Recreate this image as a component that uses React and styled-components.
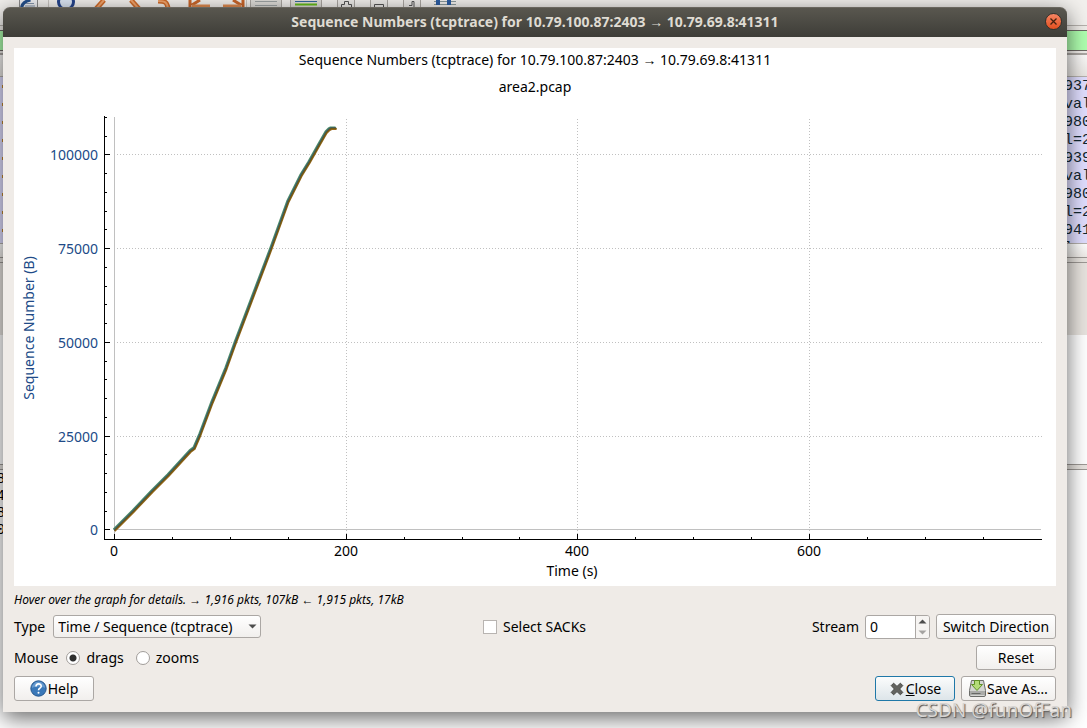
import React, { useState } from "react";
import styled, { createGlobalStyle } from "styled-components";

const GlobalStyle = createGlobalStyle`
  *, *::before, *::after {
    box-sizing: border-box;
  }
  body {
    margin: 0;
    font-family: "Noto Sans", "Open Sans", sans-serif;
    font-size: 14px;
    line-height: 20px;
    color: #000;
  }
  button, input, select {
    font: inherit;
    color: inherit;
  }
`;

/* ---- desktop and main window behind the dialog ---- */

const Desktop = styled.div`
  position: relative;
  min-height: 100vh;
  padding: 7px 20px 16px 3px;
  overflow: hidden;
`;
const MainWindow = styled.div`
  position: absolute;
  inset: 0;
  display: flex;
  flex-direction: column;
  background: #fff;
`;
const ToolBar = styled.div`
  height: 26px;
  background: #f2f0ed;
  border-bottom: 1px solid #b5b1ac;
  & svg {
    display: block;
  }
`;
const FilterBar = styled.div`
  height: 29px;
  padding: 4px 0;
  background: #efece8;
  border-bottom: 2px solid #aba7a3;
`;
const FilterField = styled.div`
  height: 21px;
  background: #afffaf;
  border: solid #6c6864;
  border-width: 1px 0;
`;
const ListHeader = styled.div`
  height: 22px;
  background: linear-gradient(#fbfaf9, #e9e6e2);
  border-bottom: 1px solid #b5b1ac;
`;
const PacketList = styled.div`
  height: 167px;
  padding-top: 1px;
  overflow: hidden;
  background: #e0deff;
  border-bottom: 1px solid #b5b1ac;
  font-family: "Liberation Mono", monospace;
  font-size: 15px;
  line-height: 18px;
  color: #12272e;
`;
const PacketRow = styled.div`
  display: flex;
  justify-content: space-between;
`;
const RowMark = styled.span`
  width: 1px;
  height: 3px;
  margin: 7px 0 0 2px;
  background: #c58a2c;
`;
const RowInfo = styled.span`
  width: 23px;
  overflow: hidden;
`;
const Scroll = styled.div`
  height: 14px;
  background: linear-gradient(#fff, #eeebe7);
  border-bottom: 1px solid #9d9995;
`;
const Splitter = styled.div`
  height: 5px;
  background: #e8e4df;
  border-bottom: 1px solid #9d9995;
`;
const Details = styled.div`
  height: 202px;
  background: linear-gradient(#e8e4df 72px, #fff 72px);
  border-bottom: 1px solid #9d9995;
`;
const Bytes = styled.div`
  padding-top: 1px;
  font-family: "Liberation Mono", monospace;
  font-size: 14px;
  line-height: 17px;
`;
const ByteRow = styled.div`
  width: 5px;
  overflow: hidden;
  direction: rtl;
`;

/* ---- dialog ---- */

const Dialog = styled.section`
  position: relative;
  border-radius: 7px 7px 0 0;
  background: #efebe7;
  box-shadow: 0 6px 22px rgba(0, 0, 0, 0.6);
`;
const TitleBar = styled.header`
  display: grid;
  grid-template-columns: 24px 1fr 24px;
  align-items: center;
  height: 30px;
  padding: 0 2px 2px;
  border-radius: 7px 7px 0 0;
  border-top: 1px solid #6a675f;
  background: linear-gradient(#59574f, #3e3d38);
`;
const Title = styled.h1`
  grid-column: 2;
  margin: 0;
  font-size: 14px;
  font-weight: 700;
  line-height: 20px;
  text-align: center;
  color: #dfdbd2;
`;
const CloseIcon = styled.button`
  display: flex;
  align-items: center;
  justify-content: center;
  justify-self: center;
  width: 17px;
  height: 17px;
  padding: 0;
  border: 1px solid #33312c;
  border-radius: 50%;
  background: linear-gradient(#f58463, #e4501f);
`;
const Body = styled.div`
  padding: 11px;
`;
const Plot = styled.svg`
  display: block;
  width: 100%;
  height: auto;
  background: #fff;
  font-size: 14px;
`;
const Hint = styled.p`
  margin: 5px 0;
  font-size: 12px;
  font-style: italic;
  line-height: 18px;
`;
const Controls = styled.div`
  display: flex;
  flex-direction: column;
  gap: 6px;
`;
const Row = styled.div`
  display: flex;
  align-items: center;
  justify-content: space-between;
  min-height: 25px;
`;
const Group = styled.div`
  display: flex;
  align-items: center;
  gap: ${(p) => (p.$wide ? 8 : 6)}px;
`;
const Option = styled.label`
  display: flex;
  align-items: center;
  gap: 6px;
  margin-right: 4px;
`;
const Button = styled.button`
  display: flex;
  align-items: center;
  justify-content: center;
  gap: 1px;
  min-width: ${(p) => p.$width || 80}px;
  height: 25px;
  padding: 0 3px;
  border: 1px solid ${(p) => (p.$active ? "#1f78a8" : "#aba7a4")};
  border-radius: 3px;
  background: ${(p) =>
    p.$active
      ? "linear-gradient(#fbfcfc, #dde5e9)"
      : "linear-gradient(#fff, #f1efed)"};
  white-space: nowrap;
`;
const SelectBox = styled.div`
  display: grid;
  align-items: center;
  & > * {
    grid-area: 1 / 1;
  }
  & > svg {
    justify-self: end;
    margin-right: 4px;
    pointer-events: none;
  }
`;
const Select = styled.select`
  appearance: none;
  width: 208px;
  height: 23px;
  padding: 0 4px;
  border: 1px solid #aba7a4;
  border-radius: 3px;
  background: linear-gradient(#fff, #f1efed);
`;
const Spin = styled.div`
  display: flex;
  width: 65px;
  height: 24px;
  border: 1px solid #aba7a4;
  border-radius: 3px;
  overflow: hidden;
  background: #fff;
`;
const SpinInput = styled.input`
  flex: 1;
  min-width: 0;
  padding: 0 4px;
  border: 0;
  outline: 0;
  background: none;
  appearance: textfield;
  &::-webkit-inner-spin-button {
    appearance: none;
  }
`;
const SpinButtons = styled.div`
  display: flex;
  flex-direction: column;
  width: 14px;
  border-left: 1px solid #aba7a4;
`;
const SpinButton = styled.button`
  display: flex;
  flex: 1;
  align-items: center;
  justify-content: center;
  padding: 0;
  border: 0;
  background: #f6f4f2;
`;
const Radio = styled.input`
  appearance: none;
  width: 14px;
  height: 14px;
  margin: 0;
  border: 1px solid #a19d9a;
  border-radius: 50%;
  background: #fff;
  &:checked {
    background: radial-gradient(#2f2f2f 3px, #fff 4px);
  }
`;
const Check = styled.input`
  appearance: none;
  width: 14px;
  height: 14px;
  margin: 0;
  border: 1px solid #b8b4b1;
  background: #fff;
  &:checked {
    background: #2f2f2f;
  }
`;
const Watermark = styled.span`
  position: absolute;
  right: 15px;
  bottom: 4px;
  font-size: 19px;
  line-height: 28px;
  color: #d6d4d2;
  text-shadow: 1px 1px 1px #555;
  pointer-events: none;
`;

const Arrow = ({ up, color = "#4d4d4d" }) => (
  <svg width="9" height="5" viewBox="0 0 9 5">
    <path d={up ? "M0.5 4.5h8L4.5 0.5z" : "M0.5 0.5h8L4.5 4.5z"} fill={color} />
  </svg>
);

const HelpIcon = () => (
  <svg width="17" height="17" viewBox="0 0 17 17">
    <circle cx="8.5" cy="8.5" r="7.7" fill="#3a78b8" stroke="#25578e" />
    <path d="M2 8a6.5 6.5 0 0 1 13 0c-4-2-9-2-13 0z" fill="#78a8d8" opacity=".7" />
    <path
      d="M6 6.5c0-3.5 5.2-3.5 5.2-.3 0 2-2.7 2-2.7 4.1"
      fill="none"
      stroke="#fff"
      strokeWidth="1.6"
    />
    <circle cx="8.5" cy="12.7" r="1" fill="#fff" />
  </svg>
);

const CrossIcon = () => (
  <svg width="16" height="14" viewBox="-1 0 16 14">
    <path
      d="M1.2 3.6 3.6 1.2 7 4.4 10.4 1.2 12.8 3.6 9.6 7 12.8 10.4 10.4 12.8 7 9.6 3.6 12.8 1.2 10.4 4.4 7z"
      fill="#62635f"
      stroke="#454642"
      strokeLinejoin="round"
    />
  </svg>
);

const SaveIcon = () => (
  <svg width="17" height="17" viewBox="0 0 17 17">
    <path
      d="M2.5.5h12l2 10V15a1.5 1.5 0 0 1-1.5 1.5H2A1.5 1.5 0 0 1 .5 15v-4.5z"
      fill="#d4d5d2"
      stroke="#6b6c69"
    />
    <path d="M1 11h15v4H1z" fill="#aaaba8" />
    <path d="M2.5 13.5h9" stroke="#686966" />
    <path d="M5.5.5h5v4h3L8 10.5 2.5 4.5h3z" fill="#b4dc78" stroke="#5f8f26" />
  </svg>
);

const ToolIcons = () => (
  <svg width="470" height="25" viewBox="0 0 470 25" fill="none">
    <path d="M19.5 0v20h18V0" fill="#eeeff2" stroke="#8a8a8a" />
    <path d="M21.5 9c0-6 4-8 9-9" stroke="#25508c" strokeWidth="3" />
    <path d="M26 3.5h8M25 6h10" stroke="#8797ac" />
    <path d="M48.5 0v20M246.5 0v20" stroke="#c9c5c0" />
    <circle cx="66" cy="2" r="7.5" fill="#dbe5f3" stroke="#26458c" strokeWidth="3" />
    <path d="m96 9 8-9M139 9l-8-9M158 1c8 0 9 2 10 7" stroke="#cf6a28" strokeWidth="5" />
    <path d="m96 9 8-9M139 9l-8-9M158 1c8 0 9 2 10 7" stroke="#f0a36b" strokeWidth="2" />
    <path d="M190 0v9M243 0v9M192 5l8-5M241 5l-8-5" stroke="#c8652a" strokeWidth="3" />
    <path d="M192 6h18M223 6h18" stroke="#e08b50" strokeWidth="3" />
    <path d="M250.5 0v20h31V0M290.5 0v20h31V0" fill="#dedcd8" stroke="#a9a5a0" />
    <path d="M255 1.5h22M255 5.5h22" stroke="#9da3a3" />
    <path d="M295 1.5h22" stroke="#34659c" />
    <path d="M295 4.5h22" stroke="#65bd18" strokeWidth="2" />
    <path
      d="M337.5 0v20h17V0M370.5 0v20h17V0M403.5 0v20h17V0"
      fill="#eceae7"
      stroke="#aaa6a1"
    />
    <path d="M341.5 7V4.5h3v-3h4v3h3V7M374.5 7V4.5h9V7M409 5.5h3v-4h2v6" stroke="#555" />
    <path d="M434 1.5h22M434 4.5h22" stroke="#8b9a9c" />
    <path d="M436 0h4v5h-4zM447 0h4v5h-4z" fill="#2c5da3" />
  </svg>
);

const packets = ["937", "val", "980", "l=2", "939", "val", "980", "l=2", "941", " l"];
const bytes = ["8", "4", "8", "0"];

// plot area in viewBox units
const X0 = 100;
const Y0 = 481.4;
const xPos = (t) => Math.round(X0 + t * 1.1585) + 0.5;
const yPos = (n) => Math.round(Y0 - n * 0.00375) + 0.5;
const range = (n, step) => Array.from({ length: n }, (_, i) => i * step);

const curve =
  "100,482 119,463 138,443 154,427 176,403 180,400 186,386 198,354 212,320 221,295 " +
  "257,200 274,153 287,127 295,114 304,98 312,84 315,81 317,80 322,80";

const SequencePlot = () => (
  <Plot viewBox="0 0 1042 538" role="img" aria-label="Sequence number over time">
    <g textAnchor="middle">
      <text x="521" y="17">
        Sequence Numbers (tcptrace) for 10.79.100.87:2403 → 10.79.69.8:41311
      </text>
      <text x="521" y="44">area2.pcap</text>
      <text x="558" y="528">Time (s)</text>
      <text transform="translate(20 280) rotate(-90)" fill="#204a87">
        Sequence Number (B)
      </text>
    </g>
    <g shapeRendering="crispEdges" fill="none">
      <g stroke="#c0c0c0" strokeDasharray="1 2">
        {[25000, 50000, 75000, 100000].map((n) => (
          <path key={n} d={`M100 ${yPos(n)}H1028`} />
        ))}
        {[200, 400, 600].map((t) => (
          <path key={t} d={`M${xPos(t)} 71V491`} />
        ))}
      </g>
      <path d="M100.5 69V491M100 481.5H1027" stroke="#c0c0c0" />
      <g stroke="#000">
        <path d="M90.5 68V492M90 491.5H1028" />
        {range(23, 5000).map((n) => (
          <path key={n} d={`M90 ${yPos(n)}h${n % 25000 ? 3 : 6}`} />
        ))}
        {range(16, 50).map((t) => (
          <path key={t} d={`M${xPos(t)} 491v${t % 200 ? -2 : -5}`} />
        ))}
      </g>
    </g>
    <g textAnchor="end" fill="#204a87">
      {range(5, 25000).map((n) => (
        <text key={n} x="84" y={yPos(n) + 5.5}>
          {n}
        </text>
      ))}
    </g>
    <g textAnchor="middle">
      {range(4, 200).map((t) => (
        <text key={t} x={xPos(t) - 0.5} y="508">
          {t}
        </text>
      ))}
    </g>
    <g fill="none" strokeLinejoin="round">
      <polyline points={curve} stroke="#96651a" strokeWidth="2" transform="translate(.6 1)" />
      <polyline points={curve} stroke="#4f8f66" strokeWidth="2" transform="translate(-.5 -.6)" />
      <polyline points={curve} stroke="#33587a" strokeWidth="1.5" />
      <polyline points={curve} stroke="#6b5a14" strokeWidth="1.2" transform="translate(.5 .4)" />
    </g>
  </Plot>
);

const App = () => {
  const [stream, setStream] = useState(0);

  return (
    <>
      <GlobalStyle />
      <Desktop>
        <MainWindow aria-hidden="true">
          <ToolBar>
            <ToolIcons />
          </ToolBar>
          <FilterBar>
            <FilterField />
          </FilterBar>
          <ListHeader />
          <PacketList>
            {packets.map((text, i) => (
              <PacketRow key={i}>
                <RowMark />
                <RowInfo>{text}</RowInfo>
              </PacketRow>
            ))}
          </PacketList>
          <Scroll />
          <Splitter />
          <Details />
          <Splitter />
          <Bytes>
            {bytes.map((text, i) => (
              <ByteRow key={i}>{text}</ByteRow>
            ))}
          </Bytes>
        </MainWindow>
        <Dialog>
          <TitleBar>
            <Title>
              Sequence Numbers (tcptrace) for 10.79.100.87:2403 → 10.79.69.8:41311
            </Title>
            <CloseIcon type="button" aria-label="Close window">
              <svg width="7" height="7" viewBox="0 0 7 7">
                <path d="m.5.5 6 6m0-6-6 6" stroke="#46210f" strokeWidth="1.3" />
              </svg>
            </CloseIcon>
          </TitleBar>
          <Body>
            <SequencePlot />
            <Hint>Hover over the graph for details. → 1,916 pkts, 107kB ← 1,915 pkts, 17kB</Hint>
            <Controls>
              <Row>
                <Group $wide>
                  <label htmlFor="type">Type</label>
                  <SelectBox>
                    <Select id="type">
                      <option>Time / Sequence (tcptrace)</option>
                    </Select>
                    <Arrow />
                  </SelectBox>
                </Group>
                <Option>
                  <Check type="checkbox" />
                  Select SACKs
                </Option>
                <Group>
                  <label htmlFor="stream">Stream</label>
                  <Spin>
                    <SpinInput
                      id="stream"
                      type="number"
                      min="0"
                      value={stream}
                      onChange={(e) => setStream(Number(e.target.value))}
                    />
                    <SpinButtons>
                      <SpinButton
                        type="button"
                        aria-label="Next stream"
                        onClick={() => setStream(stream + 1)}
                      >
                        <Arrow up />
                      </SpinButton>
                      <SpinButton
                        type="button"
                        aria-label="Previous stream"
                        onClick={() => setStream(Math.max(0, stream - 1))}
                      >
                        <Arrow color="#a5a3a1" />
                      </SpinButton>
                    </SpinButtons>
                  </Spin>
                  <Button type="button" $width={120}>
                    Switch Direction
                  </Button>
                </Group>
              </Row>
              <Row>
                <Group $wide role="radiogroup" aria-label="Mouse">
                  <span>Mouse</span>
                  <Option>
                    <Radio type="radio" name="mouse" defaultChecked />
                    drags
                  </Option>
                  <Option>
                    <Radio type="radio" name="mouse" />
                    zooms
                  </Option>
                </Group>
                <Button type="button">Reset</Button>
              </Row>
              <Row>
                <Button type="button">
                  <HelpIcon />
                  Help
                </Button>
                <Group>
                  <Button type="button" $active>
                    <CrossIcon />
                    <span>
                      <u>C</u>lose
                    </span>
                  </Button>
                  <Button type="button" $width={95}>
                    <SaveIcon />
                    Save As…
                  </Button>
                </Group>
              </Row>
            </Controls>
          </Body>
        </Dialog>
        <Watermark>CSDN @funOfFan</Watermark>
      </Desktop>
    </>
  );
};

export default App;
